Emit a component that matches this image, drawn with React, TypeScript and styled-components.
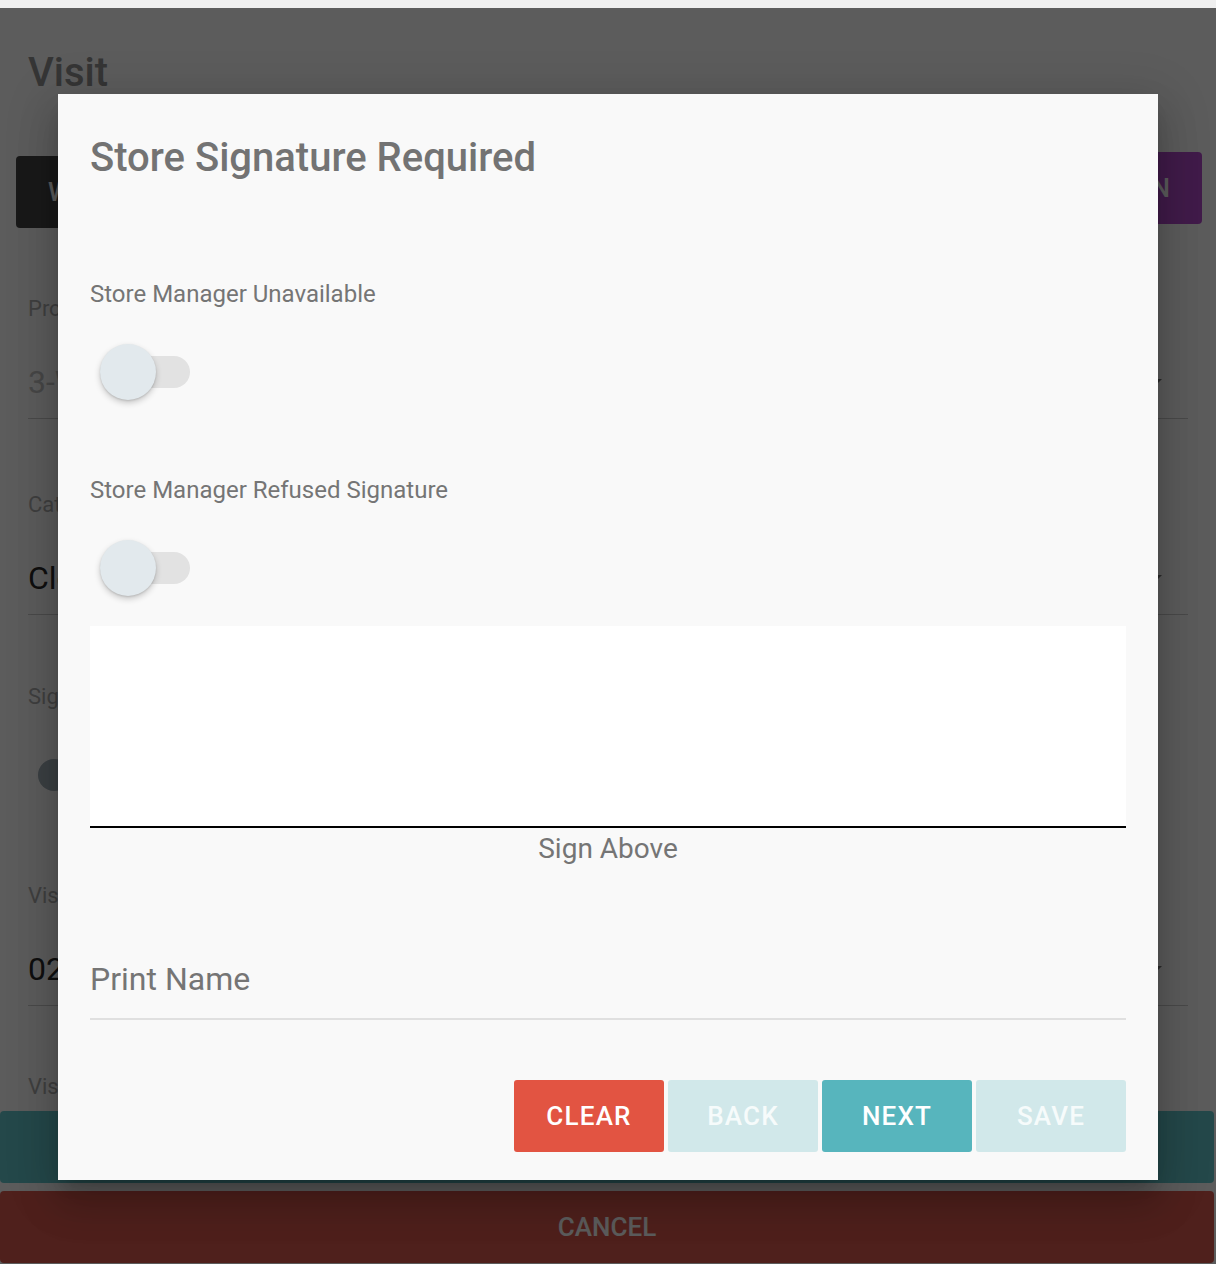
import { FC } from "react";
import styled, { createGlobalStyle } from "styled-components";

type FieldSpec = {
  label: string;
  value?: string;
  muted?: boolean;
  toggle?: boolean;
  offset: number;
};

const fields: FieldSpec[] = [
  { label: "Program", value: "3-Way Merchandising", muted: true, offset: 64 },
  { label: "Category", value: "Cleaning", offset: 69 },
  { label: "Signature Required", toggle: true, offset: 65 },
  { label: "Visit Date", value: "02/14/2024", offset: 94 },
  { label: "Visit Notes", offset: 64 },
];

const actions = [
  { label: "Clear", tone: "danger" },
  { label: "Back", tone: "soft" },
  { label: "Next", tone: "primary" },
  { label: "Save", tone: "soft" },
] as const;

const BackgroundField: FC<{ field: FieldSpec }> = ({ field }) => (
  <FieldBlock offset={field.offset}>
    <FieldLabel>{field.label}</FieldLabel>
    {field.toggle ? (
      <PageSwitch>
        <PageKnob />
      </PageSwitch>
    ) : field.value ? (
      <ValueRow>
        <Value muted={field.muted}>{field.value}</Value>
        <Caret />
      </ValueRow>
    ) : null}
  </FieldBlock>
);

const Toggle: FC = () => (
  <Switch>
    <Track />
    <Knob />
  </Switch>
);

export default function App() {
  return (
    <>
      <GlobalStyle />
      <TopStrip />
      <Screen>
        <PageTitle>Visit</PageTitle>
        <PageButtons>
          <PageButton color="#474747" lowered>
            WORK ORDER
          </PageButton>
          <PageButton color="#b54bce">SIGN IN</PageButton>
        </PageButtons>
        {fields.map((f) => (
          <BackgroundField key={f.label} field={f} />
        ))}
        <BottomBar color="#64c7cc">SUBMIT</BottomBar>
        <BottomBar color="#da5a4e">CANCEL</BottomBar>

        <Overlay>
          <Dialog>
            <DialogTitle>Store Signature Required</DialogTitle>
            <OptionLabel>Store Manager Unavailable</OptionLabel>
            <Toggle />
            <OptionLabel second>Store Manager Refused Signature</OptionLabel>
            <Toggle />
            <SignaturePad />
            <SignHint>Sign Above</SignHint>
            <NameInput placeholder="Print Name" />
            <Actions>
              {actions.map((a) => (
                <ActionButton key={a.label} tone={a.tone}>
                  {a.label}
                </ActionButton>
              ))}
            </Actions>
          </Dialog>
        </Overlay>
      </Screen>
    </>
  );
}

const GlobalStyle = createGlobalStyle`
  html, body {
    margin: 0;
    padding: 0;
    background: #ffffff;
    font-family: Roboto, "Liberation Sans", sans-serif;
  }
  * {
    box-sizing: border-box;
  }
`;

const TopStrip = styled.div`
  height: 8px;
  background: #efefef;
`;

const Screen = styled.div`
  position: relative;
  height: 1256px;
  overflow: hidden;
  background: #ffffff;
  padding-top: 41px;
`;

const PageTitle = styled.h1`
  margin: 0 0 0 28px;
  font-size: 40px;
  line-height: 48px;
  font-weight: 500;
  color: #939393;
`;

const PageButtons = styled.div`
  display: flex;
  justify-content: space-between;
  align-items: flex-start;
  margin-top: 55px;
  padding: 0 14px 0 16px;
`;

const PageButton = styled.div<{ color: string; lowered?: boolean }>`
  height: 72px;
  margin-top: ${({ lowered }) => (lowered ? "4px" : "0")};
  padding: 0 32px;
  display: flex;
  align-items: center;
  border-radius: 4px;
  background: ${({ color }) => color};
  color: #ffffff;
  font-size: 26px;
  font-weight: 500;
`;

const FieldBlock = styled.div<{ offset: number }>`
  margin: ${({ offset }) => offset}px 28px 0 28px;
`;

const FieldLabel = styled.div`
  font-size: 22px;
  line-height: 33px;
  color: #b0b0b0;
`;

const ValueRow = styled.div`
  display: flex;
  align-items: center;
  justify-content: space-between;
  margin-top: 37px;
  padding: 0 26px 16px 0;
  border-bottom: 1px solid #cdcdcd;
`;

const Value = styled.div<{ muted?: boolean }>`
  font-size: 32px;
  line-height: 40px;
  color: ${({ muted }) => (muted ? "#c4c4c4" : "#2c2c2c")};
`;

const Caret = styled.span`
  width: 0;
  height: 0;
  border-left: 6px solid transparent;
  border-right: 6px solid transparent;
  border-top: 6px solid #777777;
`;

const PageSwitch = styled.div`
  position: relative;
  width: 60px;
  height: 20px;
  margin: 52px 0 0 10px;
  border-radius: 10px;
  background: #d6d6d6;
`;

const PageKnob = styled.span`
  position: absolute;
  left: 0;
  top: -6px;
  width: 32px;
  height: 32px;
  border-radius: 50%;
  background: #a5b1bb;
`;

const BottomBar = styled.div<{ color: string }>`
  height: 72px;
  margin: 8px 2px 0 0;
  display: flex;
  align-items: center;
  justify-content: center;
  border-radius: 4px;
  background: ${({ color }) => color};
  color: #ffffff;
  font-size: 26px;
  font-weight: 500;
  &:first-of-type {
    margin-top: 0;
  }
`;

const Overlay = styled.div`
  position: absolute;
  inset: 0;
  padding-top: 2px;
  display: flex;
  align-items: center;
  justify-content: center;
  background: rgba(0, 0, 0, 0.64);
`;

const Dialog = styled.div`
  width: 1100px;
  display: flex;
  flex-direction: column;
  padding: 40px 32px 28px;
  background: #f9f9f9;
  box-shadow: 0 11px 15px -7px rgba(0, 0, 0, 0.2), 0 24px 38px 3px rgba(0, 0, 0, 0.14),
    0 9px 46px 8px rgba(0, 0, 0, 0.12);
`;

const DialogTitle = styled.h2`
  margin: 0;
  font-size: 40px;
  line-height: 48px;
  font-weight: 500;
  color: #737373;
`;

const OptionLabel = styled.div<{ second?: boolean }>`
  margin-top: ${({ second }) => (second ? "72px" : "94px")};
  font-size: 24px;
  line-height: 36px;
  color: #757575;
`;

const Switch = styled.div`
  position: relative;
  width: 90px;
  height: 56px;
  margin: 32px 0 0 10px;
`;

const Track = styled.div`
  margin-top: 12px;
  height: 32px;
  border-radius: 16px;
  background: #e2e2e2;
`;

const Knob = styled.span`
  position: absolute;
  left: 0;
  top: 0;
  width: 56px;
  height: 56px;
  border-radius: 50%;
  background: #e2e9ed;
  box-shadow: 0 3px 6px rgba(0, 0, 0, 0.2), 0 1px 2px rgba(0, 0, 0, 0.12);
`;

const SignaturePad = styled.div`
  margin-top: 30px;
  height: 202px;
  background: #ffffff;
  border-bottom: 2px solid #000000;
`;

const SignHint = styled.div`
  font-size: 28px;
  line-height: 42px;
  text-align: center;
  color: #757575;
`;

const NameInput = styled.input`
  display: block;
  width: 100%;
  height: 80px;
  margin-top: 70px;
  padding: 0;
  border: none;
  border-bottom: 2px solid #e0e0e0;
  background: transparent;
  font-family: Roboto, "Liberation Sans", sans-serif;
  font-size: 32px;
  color: #444444;
  outline: none;
  &::placeholder {
    color: #757575;
  }
`;

const Actions = styled.div`
  display: flex;
  justify-content: flex-end;
  gap: 4px;
  margin-top: 60px;
`;

const toneBg = {
  danger: "#e25442",
  soft: "#d1e8ea",
  primary: "#57b5bd",
};

const ActionButton = styled.button<{ tone: keyof typeof toneBg }>`
  width: 150px;
  height: 72px;
  border: none;
  border-radius: 3px;
  background: ${({ tone }) => toneBg[tone]};
  color: ${({ tone }) => (tone === "soft" ? "#f6fbfb" : "#ffffff")};
  font-family: Roboto, "Liberation Sans", sans-serif;
  font-size: 26px;
  font-weight: 500;
  letter-spacing: 1.2px;
  text-transform: uppercase;
`;
